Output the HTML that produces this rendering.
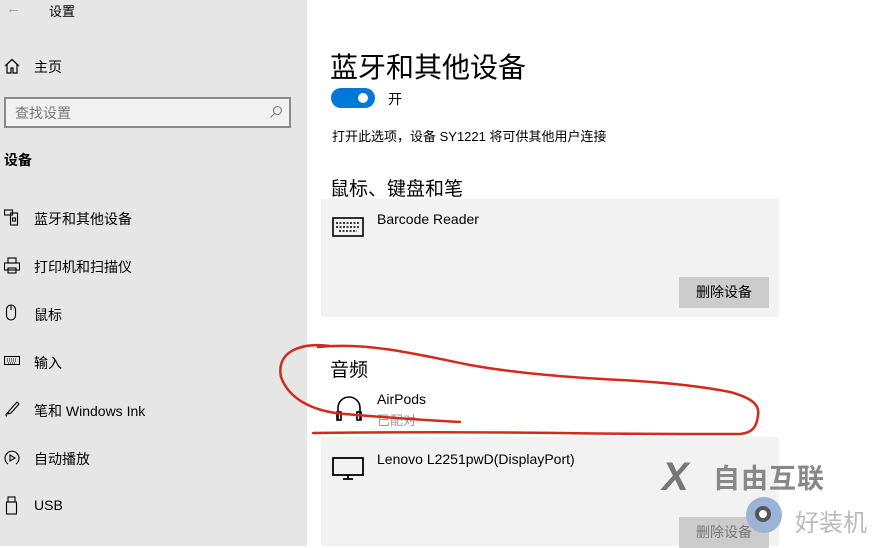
<!DOCTYPE html>
<html><head><meta charset="utf-8"><style>
*{margin:0;padding:0;box-sizing:border-box}
body{width:880px;height:546px;overflow:hidden;position:relative;background:#fff;font-family:"Liberation Sans","Noto Sans CJK SC",sans-serif;color:#000}
.side{position:absolute;left:0;top:0;width:307px;height:546px;background:#e6e6e6}
.a{position:absolute;white-space:nowrap}
.it{font-size:14px;left:34px}
.ic{position:absolute;left:4px}
.card{position:absolute;left:321px;width:458px;background:#f2f2f2}
.btn{position:absolute;width:90px;height:31px;background:#cccccc;font-size:14px;text-align:center;line-height:31px}
</style></head><body>
<div class="side">
<div class="a" style="left:6px;top:0px;font-size:15px;color:#999">←</div>
<div class="a" style="left:49px;top:1px;font-size:13px">设置</div>
<svg class="ic" style="top:58px" width="16" height="16" viewBox="0 0 16 16" fill="none" stroke="#000" stroke-width="1.2"><path d="M1 8L8 1.5 15 8M3 6.5V15h4v-5h2v5h4V6.5"/></svg>
<div class="a it" style="top:57px">主页</div>
<div class="a" style="left:4px;top:97px;width:287px;height:31px;border:2px solid #8a8a8a;background:#f2f2f2"></div>
<div class="a" style="left:15px;top:103px;font-size:14px;color:#777">查找设置</div>
<svg class="a" style="left:269px;top:105px" width="14" height="14" viewBox="0 0 14 14" fill="none" stroke="#777" stroke-width="1.1"><circle cx="8.5" cy="5.5" r="4"/><path d="M5.5 8.5L1.5 12.5"/></svg>
<div class="a" style="left:4px;top:150px;font-size:14px;font-weight:bold">设备</div>
<svg class="ic" style="top:209px" width="16" height="18" viewBox="0 0 16 18" fill="none" stroke="#000" stroke-width="1.1"><rect x="0.5" y="1" width="8" height="5"/><rect x="6.5" y="4" width="7" height="12"/><rect x="8.5" y="9" width="3" height="3"/></svg>
<div class="a it" style="top:209px">蓝牙和其他设备</div>
<svg class="ic" style="top:257px" width="16" height="18" viewBox="0 0 16 18" fill="none" stroke="#000" stroke-width="1.1"><rect x="4" y="1" width="8" height="5"/><rect x="0.5" y="6" width="15" height="7"/><rect x="4" y="11" width="8" height="5"/></svg>
<div class="a it" style="top:257px">打印机和扫描仪</div>
<svg class="ic" style="top:304px" width="16" height="18" viewBox="0 0 16 18" fill="none" stroke="#000" stroke-width="1.1"><rect x="2.5" y="1" width="9" height="15" rx="4.5"/><path d="M7 1v5"/></svg>
<div class="a it" style="top:305px">鼠标</div>
<svg class="ic" style="top:355px" width="16" height="12" viewBox="0 0 16 12" fill="none" stroke="#000" stroke-width="1.1"><rect x="0.5" y="1.5" width="15" height="8"/><path d="M3 4h10M3 6h10M4 8h8" stroke-dasharray="1 1"/></svg>
<div class="a it" style="top:353px">输入</div>
<svg class="ic" style="top:400px" width="16" height="18" viewBox="0 0 16 18" fill="none" stroke="#000" stroke-width="1.1"><path d="M13 2l2 2-8 9-3 1 1-3zM5 12c-3 1-4 4-2 4"/></svg>
<div class="a it" style="top:401px">笔和 Windows Ink</div>
<svg class="ic" style="top:449px" width="16" height="18" viewBox="0 0 16 18" fill="none" stroke="#000" stroke-width="1.1"><path d="M4 15A7 7 0 1 1 12 15"/><path d="M6 6v6l5-3z"/></svg>
<div class="a it" style="top:449px">自动播放</div>
<svg class="ic" style="top:496px" width="16" height="20" viewBox="0 0 16 20" fill="none" stroke="#000" stroke-width="1.1"><rect x="4" y="1" width="7" height="5"/><rect x="2.5" y="6" width="10" height="12"/></svg>
<div class="a it" style="top:497px">USB</div>
</div>

<div class="a" style="left:330px;top:46px;font-size:28px">蓝牙和其他设备</div>
<div class="a" style="left:331px;top:88px;width:44px;height:20px;border-radius:10px;background:#0078d7"></div>
<div class="a" style="left:358px;top:93px;width:10px;height:10px;border-radius:5px;background:#fff"></div>
<div class="a" style="left:388px;top:89px;font-size:14px">开</div>
<div class="a" style="left:332px;top:126px;font-size:13px">打开此选项，设备 SY1221 将可供其他用户连接</div>
<div class="a" style="left:330px;top:174px;font-size:19px">鼠标、键盘和笔</div>
<div class="card" style="top:199px;height:118px"></div>
<svg class="a" style="left:332px;top:217px" width="32" height="21" viewBox="0 0 32 21" fill="none" stroke="#000" stroke-width="1.6"><rect x="1" y="1" width="30" height="18"/><path d="M4 6h24M4 10h24M7 14h18" stroke-dasharray="2 1.5"/></svg>
<div class="a" style="left:377px;top:211px;font-size:14px">Barcode Reader</div>
<div class="btn" style="left:679px;top:277px">删除设备</div>
<div class="a" style="left:330px;top:355px;font-size:19px">音频</div>
<svg class="a" style="left:335px;top:394px" width="28" height="28" viewBox="0 0 28 28" fill="none" stroke="#000" stroke-width="1.6"><path d="M3 26V14a11 11 0 0 1 22 0v12"/><rect x="2" y="18" width="4" height="8"/><rect x="22" y="18" width="4" height="8"/></svg>
<div class="a" style="left:377px;top:391px;font-size:14px">AirPods</div>
<div class="a" style="left:377px;top:410px;font-size:13px;color:#999">已配对</div>
<div class="card" style="top:437px;height:109px"></div>
<svg class="a" style="left:332px;top:457px" width="32" height="24" viewBox="0 0 32 24" fill="none" stroke="#000" stroke-width="1.8"><rect x="1" y="1" width="30" height="17"/><path d="M16 18v4M11 22h10"/></svg>
<div class="a" style="left:377px;top:451px;font-size:14px">Lenovo L2251pwD(DisplayPort)</div>
<div class="btn" style="left:679px;top:517px;color:#777">删除设备</div>
<div class="a" style="left:713px;top:457px;font-size:27px;font-weight:bold;color:#888;letter-spacing:1px">自由互联</div>
<div class="a" style="left:662px;top:455px;font-size:40px;font-weight:bold;font-style:italic;color:#777">X</div>
<div class="a" style="left:746px;top:497px;width:36px;height:36px;border-radius:50%;background:#9cb3d8"></div>
<div class="a" style="left:755px;top:506px;width:16px;height:16px;border-radius:50%;background:#fff;border:4px solid #555"></div>
<div class="a" style="left:795px;top:503px;font-size:24px;color:#bbb">好装机</div>
<svg class="a" style="left:0;top:0" width="880" height="546" fill="none" stroke="#d42a1e" stroke-width="2.5" stroke-linecap="round">
<path d="M330 346C300 342 276 352 281 377C290 402 318 412 345 414"/>
<path d="M318 347C370 342 420 355 470 365C520 374 580 378 620 380C660 382 700 386 730 392C752 398 760 405 758 415C757 427 752 433 740 434C680 434 620 434 560 433C480 432 400 432 313 433"/>
<path d="M345 414C380 417 420 420 460 422"/>
</svg>
</body></html>
